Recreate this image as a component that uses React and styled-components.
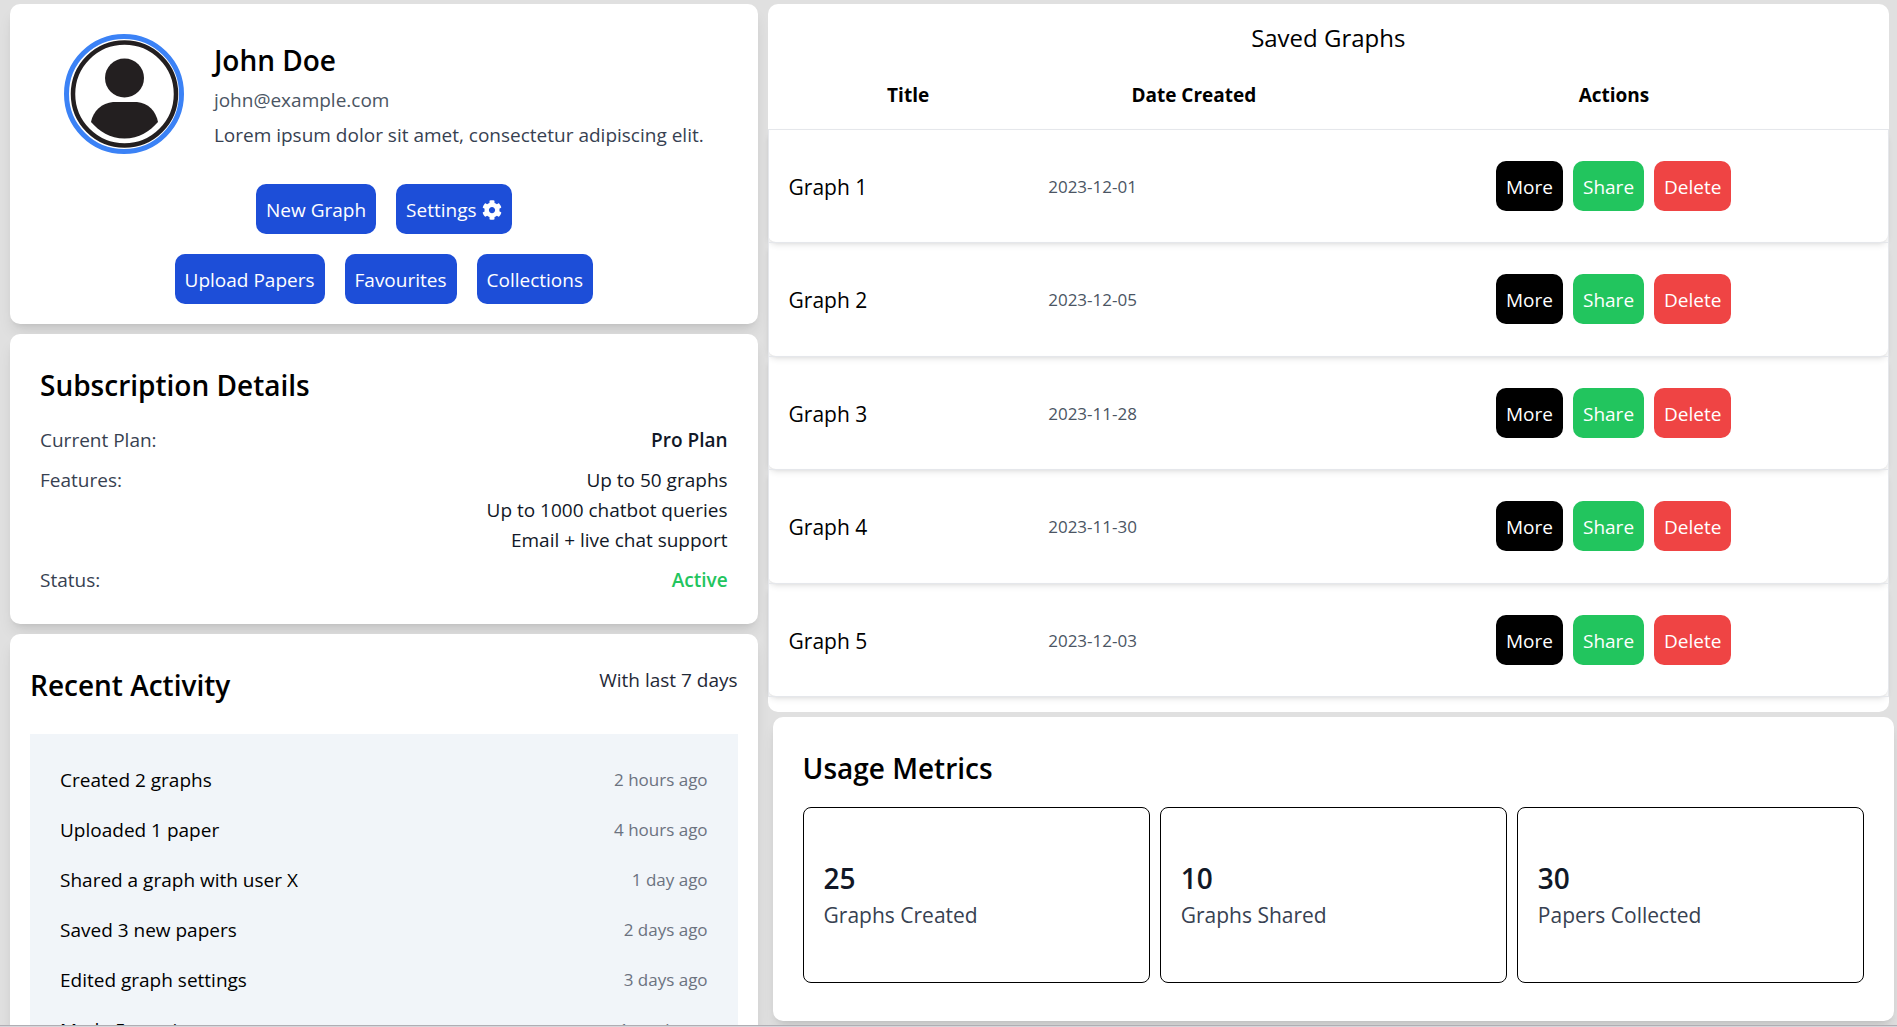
import React from 'react';
import styled, { createGlobalStyle } from 'styled-components';
import { FaCog } from 'react-icons/fa';

const GlobalStyle = createGlobalStyle`
  *, *::before, *::after { box-sizing: border-box; }
  html, body, #root { height: 100%; }
  body {
    margin: 0;
    background: #e0e0e0;
    color: #000;
    font-family: "Open Sans", "Noto Sans", sans-serif;
    font-size: 19px;
    line-height: 30px;
    overflow: hidden;
  }
  h1, h2, h3, p, ul, dl, dd { margin: 0; padding: 0; }
  ul { list-style: none; }
`;

const Page = styled.div`
  height: 100%;
  display: flex;
  flex-direction: column;
  border-bottom: 1px solid #d6d6da;
`;

const Columns = styled.main`
  flex: 1;
  min-height: 0;
  overflow: hidden;
  display: grid;
  grid-template-columns: minmax(0, 2fr) minmax(0, 3fr);
  gap: 10px;
  padding: 4px 8px 0 10px;
  border-bottom: 1px solid #b0aeb4;
`;

const LeftColumn = styled.div`
  display: flex;
  flex-direction: column;
  gap: 10px;
`;

const RightColumn = styled.div`
  display: flex;
  flex-direction: column;
  gap: 5px;
`;

const Card = styled.section`
  flex-shrink: 0;
  background: #fff;
  border-radius: 10px;
  padding: ${(p) => p.$padding || '31px 30px 29px'};
  box-shadow: ${(p) =>
    p.$flat ? 'none' : '0 10px 15px -3px rgba(0,0,0,0.1), 0 4px 6px -4px rgba(0,0,0,0.1)'};
`;

const Heading = styled.h2`
  font-size: 28px;
  line-height: 40px;
  font-weight: 600;
`;

const Profile = styled.div`
  display: flex;
  justify-content: center;
  align-items: center;
  gap: 30px;
  margin-bottom: 30px;
`;

const Avatar = styled.svg`
  width: 120px;
  height: 120px;
  flex-shrink: 0;
`;

const ProfileText = styled.div`
  display: flex;
  flex-direction: column;
  gap: 5px;
  padding-top: 2px;
`;

const Email = styled.p`
  color: #4b5563;
`;

const Bio = styled.p`
  color: #374151;
`;

const ButtonRows = styled.div`
  display: flex;
  flex-direction: column;
  gap: 20px;
`;

const ButtonRow = styled.div`
  display: flex;
  justify-content: center;
  gap: ${(p) => p.$gap || '20px'};
`;

const Button = styled.button`
  display: flex;
  align-items: center;
  gap: 5px;
  height: 50px;
  padding: 2px 10px 0;
  border: 0;
  border-radius: 10px;
  background: ${(p) => p.$color || '#1d4ed8'};
  color: #fff;
  font: inherit;
  cursor: pointer;
`;

const Details = styled.dl`
  display: flex;
  flex-direction: column;
  gap: 10px;
  margin-top: 20px;
`;

const Detail = styled.div`
  display: flex;
  justify-content: space-between;
`;

const Term = styled.dt`
  color: #374151;
`;

const Value = styled.dd`
  text-align: right;
  font-weight: ${(p) => (p.$strong ? 600 : 400)};
  color: ${(p) => p.$color || '#111827'};
`;

const ActivityHeader = styled.header`
  display: flex;
  justify-content: space-between;
  align-items: flex-start;
  margin-bottom: 29px;
`;

const Period = styled.p`
  color: #1f2937;
`;

const ActivityList = styled.ul`
  display: flex;
  flex-direction: column;
  gap: 20px;
  padding: 31px 30px 29px;
  background: #f1f5f9;
`;

const Activity = styled.li`
  display: flex;
  justify-content: space-between;
  align-items: center;
`;

const Time = styled.time`
  font-size: 17px;
  color: #6b7280;
`;

const TableTitle = styled.h2`
  padding-top: 16px;
  font-size: 24px;
  line-height: 35px;
  font-weight: 500;
  text-align: center;
`;

const Table = styled.table`
  width: 100%;
  border-collapse: collapse;
  table-layout: fixed;
`;

const HeadCell = styled.th`
  width: ${(p) => p.$width};
  height: 74px;
  padding: 6px 0 0;
  font-size: 19px;
  font-weight: 700;
  text-align: center;
`;

const GraphRow = styled.tr`
  height: 113px;
  border: 1px solid #e5e7eb;
  border-radius: 8px;
  box-shadow: 0 4px 6px -1px rgba(0,0,0,0.1), 0 2px 4px -2px rgba(0,0,0,0.1);

  &:nth-child(even) {
    height: 114px;
  }
`;

const Cell = styled.td`
  padding: 0;
`;

const TitleCell = styled(Cell)`
  padding: 2px 0 0 20px;
  font-size: 21px;
`;

const DateCell = styled(Cell)`
  padding-top: 2px;
  font-size: 17px;
  color: #4b5563;
`;

const UsageCard = styled(Card)`
  margin: 0 -5px 0 5px;
`;

const Metrics = styled.div`
  display: grid;
  grid-template-columns: repeat(3, minmax(0, 1fr));
  gap: 10px;
  margin-top: 19px;
`;

const Metric = styled.div`
  padding: 50px 20px 49px;
  border: 1px solid #000;
  border-radius: 8px;
`;

const MetricValue = styled.p`
  font-size: 28px;
  line-height: 40px;
  font-weight: 600;
  color: #111827;
`;

const MetricLabel = styled.p`
  font-size: 21px;
  line-height: 35px;
  color: #374151;
`;

const activities = [
  ['Created 2 graphs', '2 hours ago'],
  ['Uploaded 1 paper', '4 hours ago'],
  ['Shared a graph with user X', '1 day ago'],
  ['Saved 3 new papers', '2 days ago'],
  ['Edited graph settings', '3 days ago'],
  ['Made 5 queries', '1 week ago'],
];

const graphs = [
  ['Graph 1', '2023-12-01'],
  ['Graph 2', '2023-12-05'],
  ['Graph 3', '2023-11-28'],
  ['Graph 4', '2023-11-30'],
  ['Graph 5', '2023-12-03'],
];

const metrics = [
  [25, 'Graphs Created'],
  [10, 'Graphs Shared'],
  [30, 'Papers Collected'],
];

export default function App() {
  return (
    <>
      <GlobalStyle />
      <Page>
        <Columns>
          <LeftColumn>
            <Card $padding="30px 20px 20px">
              <Profile>
                <Avatar viewBox="0 0 120 120" role="img" aria-label="John Doe">
                  <circle cx="60" cy="60" r="57.5" fill="#fff" stroke="#3b82f6" strokeWidth="5" />
                  <circle cx="60.5" cy="60" r="51.5" fill="none" stroke="#231f20" strokeWidth="4.5" />
                  <circle cx="60.5" cy="44" r="19.5" fill="#231f20" />
                  <path d="M49 68H73C84 69 92 77 94 88C86 97 75 104.500 60.500 104.500C46 104.500 35 97 27 88C29 77 38 69 49 68Z" fill="#231f20" />
                </Avatar>
                <ProfileText>
                  <Heading as="h1">John Doe</Heading>
                  <Email>john@example.com</Email>
                  <Bio>Lorem ipsum dolor sit amet, consectetur adipiscing elit.</Bio>
                </ProfileText>
              </Profile>
              <ButtonRows>
                <ButtonRow>
                  <Button>New Graph</Button>
                  <Button>Settings <FaCog size={20} aria-hidden="true" /></Button>
                </ButtonRow>
                <ButtonRow>
                  <Button>Upload Papers</Button>
                  <Button>Favourites</Button>
                  <Button>Collections</Button>
                </ButtonRow>
              </ButtonRows>
            </Card>

            <Card>
              <Heading>Subscription Details</Heading>
              <Details>
                <Detail>
                  <Term>Current Plan:</Term>
                  <Value $strong>Pro Plan</Value>
                </Detail>
                <Detail>
                  <Term>Features:</Term>
                  <Value>
                    <ul>
                      <li>Up to 50 graphs</li>
                      <li>Up to 1000 chatbot queries</li>
                      <li>Email + live chat support</li>
                    </ul>
                  </Value>
                </Detail>
                <Detail>
                  <Term>Status:</Term>
                  <Value $strong $color="#22c55e">Active</Value>
                </Detail>
              </Details>
            </Card>

            <Card $padding="31px 20px 30px">
              <ActivityHeader>
                <Heading>Recent Activity</Heading>
                <Period>With last 7 days</Period>
              </ActivityHeader>
              <ActivityList>
                {activities.map(([text, time]) => (
                  <Activity key={text}>
                    <span>{text}</span>
                    <Time>{time}</Time>
                  </Activity>
                ))}
              </ActivityList>
            </Card>
          </LeftColumn>

          <RightColumn>
            <Card $flat $padding="0 0 15px">
              <TableTitle>Saved Graphs</TableTitle>
              <Table>
                <thead>
                  <tr>
                    <HeadCell $width="25%">Title</HeadCell>
                    <HeadCell $width="26%">Date Created</HeadCell>
                    <HeadCell $width="49%">Actions</HeadCell>
                  </tr>
                </thead>
                <tbody>
                  {graphs.map(([title, date]) => (
                    <GraphRow key={title}>
                      <TitleCell>{title}</TitleCell>
                      <DateCell>{date}</DateCell>
                      <Cell>
                        <ButtonRow $gap="10px">
                          <Button $color="#000">More</Button>
                          <Button $color="#22c55e">Share</Button>
                          <Button $color="#ef4444">Delete</Button>
                        </ButtonRow>
                      </Cell>
                    </GraphRow>
                  ))}
                </tbody>
              </Table>
            </Card>

            <UsageCard $padding="31px 30px 38px">
              <Heading>Usage Metrics</Heading>
              <Metrics>
                {metrics.map(([value, label]) => (
                  <Metric key={label}>
                    <MetricValue>{value}</MetricValue>
                    <MetricLabel>{label}</MetricLabel>
                  </Metric>
                ))}
              </Metrics>
            </UsageCard>
          </RightColumn>
        </Columns>
      </Page>
    </>
  );
}
